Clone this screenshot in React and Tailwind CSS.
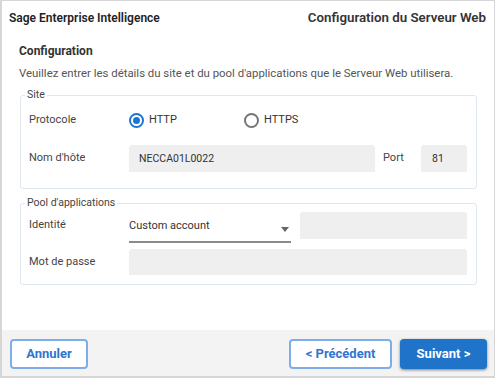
import { useState } from 'react';

export default function App() {
  const [protocol, setProtocol] = useState('http');

  const Radio = ({ value, label }) => (
    <label className="flex items-center gap-[5px] cursor-pointer" onClick={() => setProtocol(value)}>
      <span
        className={
          'w-[15px] h-[15px] rounded-full border-2 flex items-center justify-center ' +
          (protocol === value ? 'border-[#1976d2]' : 'border-[#757575]')
        }
      >
        {protocol === value && <span className="w-[7px] h-[7px] rounded-full bg-[#1976d2]" />}
      </span>
      <span className="text-[11px] text-[#333]">{label}</span>
    </label>
  );

  return (
    <div
      className="w-[495px] h-[378px] flex flex-col bg-white border border-[#d6d6d6] border-l-2 overflow-hidden"
      style={{ fontFamily: 'Roboto, "Liberation Sans", sans-serif' }}
    >
      {/* header */}
      <div className="h-[33px] flex items-center justify-between pl-[7px] pr-[8px]">
        <span className="text-[12px] font-semibold text-[#222]">Sage Enterprise Intelligence</span>
        <span className="text-[13.3px] font-semibold text-[#333]">Configuration du Serveur Web</span>
      </div>

      {/* body */}
      <div className="flex-1 pl-[17px] pr-[17px]">
        <h2 className="mt-[8px] text-[12px] leading-[18px] font-bold text-[#333]">Configuration</h2>
        <p className="mt-[4px] text-[11.4px] leading-[18px] text-[#555] whitespace-nowrap">
          Veuillez entrer les détails du site et du pool d'applications que le Serveur Web utilisera.
        </p>

        <fieldset className="mt-[5px] border border-[#e0e6ee] rounded-[3px] pl-[8px] pr-[8px] pb-[16px] ml-[1px]">
          <legend className="px-[2px] ml-[-4px] text-[10.5px] leading-[16px] text-[#444]">Site</legend>
          <div className="flex items-center h-[24px] mt-[5px]">
            <span className="w-[100px] text-[11px] text-[#444]">Protocole</span>
            <div className="w-[115px]">
              <Radio value="http" label="HTTP" />
            </div>
            <Radio value="https" label="HTTPS" />
          </div>
          <div className="flex items-center mt-[13px]">
            <span className="w-[100px] text-[11px] text-[#444]">Nom d'hôte</span>
            <div className="w-[246px] h-[27px] bg-[#efefef] rounded-t-[3px] flex items-center px-[10px] text-[10.5px] text-[#333]">
              NECCA01L0022
            </div>
            <span className="ml-[8px] w-[38px] text-[11px] text-[#444]">Port</span>
            <div className="w-[46px] h-[27px] bg-[#efefef] rounded-t-[3px] flex items-center px-[11px] text-[10.5px] text-[#333]">
              81
            </div>
          </div>
        </fieldset>

        <fieldset className="mt-[6px] border border-[#e0e6ee] rounded-[3px] pl-[8px] pr-[8px] pb-[9px] ml-[1px]">
          <legend className="px-[2px] ml-[-4px] text-[10.5px] leading-[16px] text-[#444]">Pool d'applications</legend>
          <div className="flex items-start mt-[1px]">
            <span className="w-[100px] h-[27px] flex items-center text-[11px] text-[#444]">Identité</span>
            <div className="relative w-[162px] h-[31px] border-b-2 border-[#8a8a8a] flex items-start pt-[6px] text-[11px] text-[#333]">
              Custom account
              <svg className="absolute right-[2px] top-[15px]" width="8" height="5" viewBox="0 0 8 5">
                <path d="M0 0 L8 0 L4 5 Z" fill="#666" />
              </svg>
            </div>
            <div className="ml-[9px] w-[167px] h-[27px] bg-[#efefef] rounded-t-[3px]" />
          </div>
          <div className="flex items-center mt-[6px]">
            <span className="w-[100px] text-[11px] text-[#444]">Mot de passe</span>
            <div className="w-[338px] h-[26px] bg-[#efefef] rounded-t-[3px]" />
          </div>
        </fieldset>
      </div>

      {/* footer */}
      <div className="h-[47px] bg-[#f3f3f3] flex items-start justify-between pt-[9px] pl-[8px] pr-[7px] border-b border-[#d6d6d6]">
        <button className="w-[78px] h-[30px] border-2 border-[#7eaee8] rounded-[4px] text-[13px] font-bold text-[#2f76cf] bg-white">
          Annuler
        </button>
        <div className="flex gap-[8px]">
          <button className="w-[103px] h-[30px] border-2 border-[#7eaee8] rounded-[4px] text-[13px] font-bold text-[#2f76cf] bg-white">
            &lt; Précédent
          </button>
          <button className="w-[87px] h-[30px] rounded-[4px] text-[13px] font-bold text-white bg-[#1f73c9] shadow-[0_1px_3px_rgba(0,0,0,0.5)]">
            Suivant &gt;
          </button>
        </div>
      </div>
    </div>
  );
}
